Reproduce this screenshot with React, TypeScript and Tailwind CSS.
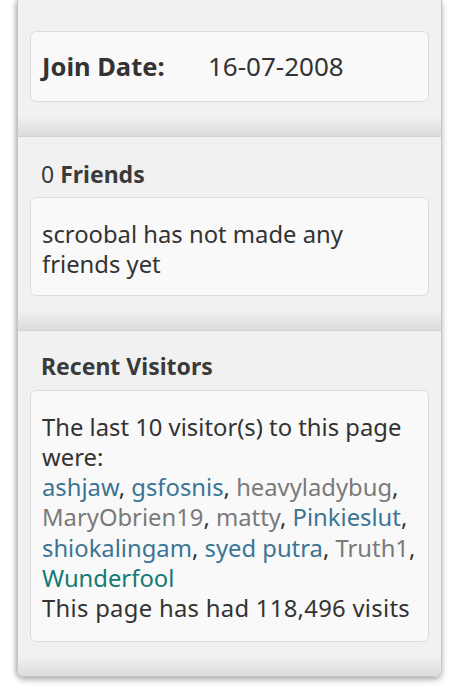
import React from "react";

const blue = "text-[#3b7595]";
const gray = "text-[#7a7a7a]";
const teal = "text-[#127a72]";

function Section({ children, last }: { children: React.ReactNode; last?: boolean }) {
  return (
    <div
      className={
        "px-[12px] bg-[linear-gradient(to_bottom,#f1f1f1_calc(100%_-_20px),#dcdcdc)] " +
        (last ? "pb-[34px] rounded-b-[6px]" : "pb-[34px] border-b border-[#d4d4d4]")
      }
    >
      {children}
    </div>
  );
}

function Card({ children, className = "" }: { children: React.ReactNode; className?: string }) {
  return (
    <div className={"bg-[#f9f9f9] border border-[#dcdcdc] rounded-[6px] px-[11px] " + className}>
      {children}
    </div>
  );
}

export default function App() {
  return (
    <div
      className="w-[460px] h-[699px] bg-white overflow-hidden text-[#333333] text-[23.8px] leading-[30.3px]"
      style={{ fontFamily: '"Noto Sans", "Open Sans", sans-serif' }}
    >
      <div className="ml-[17px] w-[425px] border-x border-b border-[#c6c6c6] rounded-b-[7px] shadow-[0_3px_6px_rgba(0,0,0,0.28),-2px_0_4px_rgba(0,0,0,0.15)]">
        <Section>
          <div className="pt-[31px]">
            <Card className="h-[71px] flex items-center">
              <span className="font-bold w-[166px] text-[25.5px] text-[#333]">Join Date:</span>
              <span className="text-[26px]">16-07-2008</span>
            </Card>
          </div>
        </Section>
        <Section>
          <div className="pt-[22px] pb-[7px] pl-[11px] text-[23px] leading-[30.5px] text-[#3a3a3a]">
            0 <span className="font-bold">Friends</span>
          </div>
          <Card className="pt-[21px] pb-[16px] whitespace-nowrap">
            scroobal has not made any
            <br />
            friends yet
          </Card>
        </Section>
        <Section last>
          <div className="pt-[20px] pb-[8px] pl-[11px] text-[23px] leading-[30.5px] font-bold text-[#3a3a3a]">
            Recent Visitors
          </div>
          <Card className="pt-[21px] pb-[17px] whitespace-nowrap">
            <div>
              The last 10 visitor(s) to this page
              <br />
              were:
            </div>
            <div>
              <span className={blue}>ashjaw</span>, <span className={blue}>gsfosnis</span>,{" "}
              <span className={gray}>heavyladybug</span>,
              <br />
              <span className={gray}>MaryObrien19</span>, <span className={gray}>matty</span>,{" "}
              <span className={blue}>Pinkieslut</span>,
              <br />
              <span className={blue}>shiokalingam</span>, <span className={blue}>syed putra</span>,{" "}
              <span className={gray}>Truth1</span>,
              <br />
              <span className={teal}>Wunderfool</span>
            </div>
            <div className="tracking-[0.3px]">This page has had 118,496 visits</div>
          </Card>
        </Section>
      </div>
    </div>
  );
}
